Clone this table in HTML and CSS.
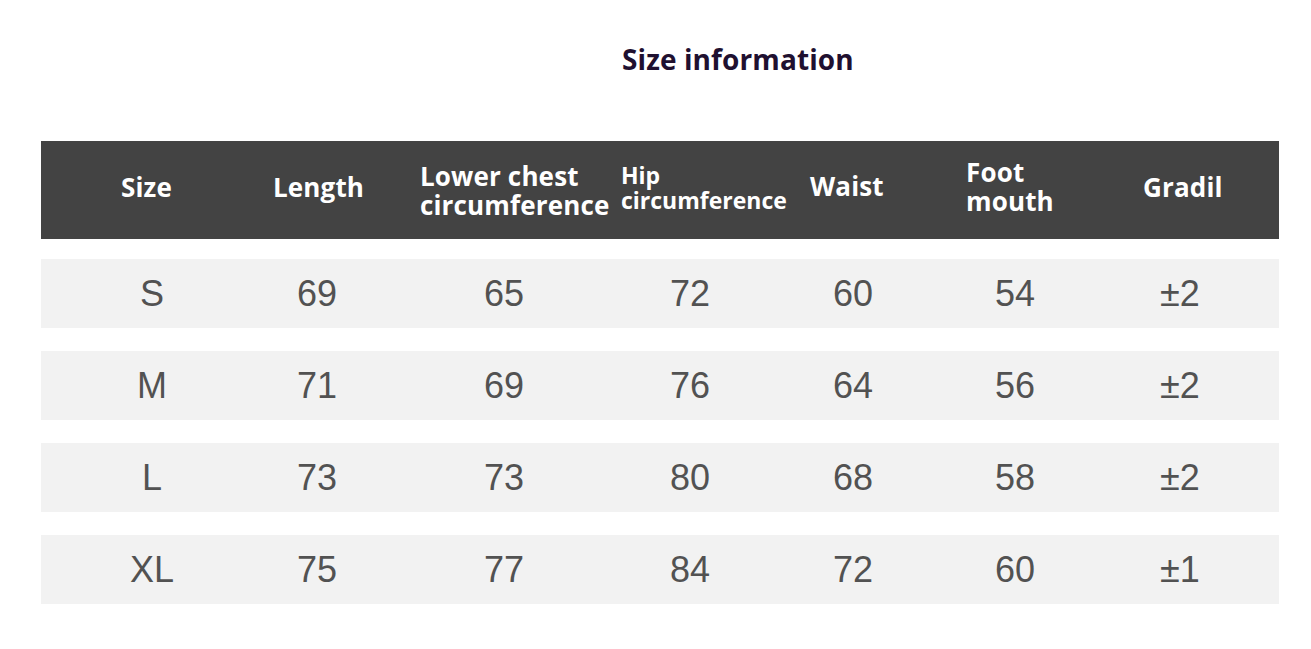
FILE: index.html
```html
<!DOCTYPE html>
<html lang="en">
<head>
<meta charset="utf-8">
<title>Size information</title>
<link rel="stylesheet" href="styles.css">
</head>
<body>
<div class="page">
  <h1 class="title">Size information</h1>
  <div class="table">
    <div class="row head">
      <div class="cell">Size</div>
      <div class="cell">Length</div>
      <div class="cell"><span class="line">Lower chest</span><span class="line">circumference</span></div>
      <div class="cell small"><span class="line">Hip</span><span class="line">circumference</span></div>
      <div class="cell">Waist</div>
      <div class="cell"><span class="line">Foot</span><span class="line">mouth</span></div>
      <div class="cell">Gradil</div>
    </div>
    <div class="row data">
      <div class="cell">S</div><div class="cell">69</div><div class="cell">65</div><div class="cell">72</div><div class="cell">60</div><div class="cell">54</div><div class="cell">±2</div>
    </div>
    <div class="row data">
      <div class="cell">M</div><div class="cell">71</div><div class="cell">69</div><div class="cell">76</div><div class="cell">64</div><div class="cell">56</div><div class="cell">±2</div>
    </div>
    <div class="row data">
      <div class="cell">L</div><div class="cell">73</div><div class="cell">73</div><div class="cell">80</div><div class="cell">68</div><div class="cell">58</div><div class="cell">±2</div>
    </div>
    <div class="row data">
      <div class="cell">XL</div><div class="cell">75</div><div class="cell">77</div><div class="cell">84</div><div class="cell">72</div><div class="cell">60</div><div class="cell">±1</div>
    </div>
  </div>
</div>
</body>
</html>
```

FILE: styles.css
```css
html, body {
  margin: 0;
  padding: 0;
  background: #ffffff;
}

.page {
  width: 1311px;
  height: 649px;
  box-sizing: border-box;
  padding-top: 40px;
}

.title {
  margin: 0 0 0 622px;
  font-family: "Open Sans", sans-serif;
  font-weight: 700;
  font-size: 28px;
  line-height: 38px;
  color: #1f1030;
  letter-spacing: 0.1px;
}

.table {
  margin: 63px 0 0 41px;
  width: 1238px;
  display: flex;
  flex-direction: column;
  gap: 23px;
}

.row {
  display: grid;
  grid-template-columns: 193px 176px 205px 183px 137px 162px 182px;
  align-items: center;
}

.head {
  height: 98px;
  background: #434343;
  margin-bottom: -3px;
  font-family: "Open Sans", sans-serif;
  font-weight: 700;
  font-size: 26px;
  line-height: 29px;
  color: #ffffff;
  letter-spacing: 0.15px;
}

.head .cell {
  margin-top: -5px;
}

.head .line {
  display: block;
  height: 29px;
}

.head .cell:nth-child(1) { padding-left: 80px; }
.head .cell:nth-child(2) { padding-left: 39px; }
.head .cell:nth-child(3) { padding-left: 10px; margin-top: 2px; }
.head .cell:nth-child(4) { padding-left: 6px; margin-top: -4px; }
.head .cell:nth-child(5) { padding-left: 12px; margin-top: -8px; }
.head .cell:nth-child(6) { padding-left: 31px; margin-top: -6px; }
.head .cell:nth-child(7) { padding-left: 46px; }

.head .small {
  font-size: 23px;
  line-height: 25px;
  letter-spacing: 0;
}

.head .small .line {
  height: 25px;
}

.data {
  height: 69px;
  background: #f2f2f2;
  font-family: "Liberation Sans", Arial, sans-serif;
  font-size: 36px;
  color: #525252;
  text-align: center;
}

.data .cell:nth-child(1) { padding-left: 29px; }
.data .cell:nth-child(2) { padding-right: 10px; }
.data .cell:nth-child(3) { padding-right: 17px; }
.data .cell:nth-child(4) { padding-right: 33px; }
.data .cell:nth-child(5) { padding-right: 27px; }
.data .cell:nth-child(6) { padding-right: 2px; }
.data .cell:nth-child(7) { padding-right: 16px; }
```
